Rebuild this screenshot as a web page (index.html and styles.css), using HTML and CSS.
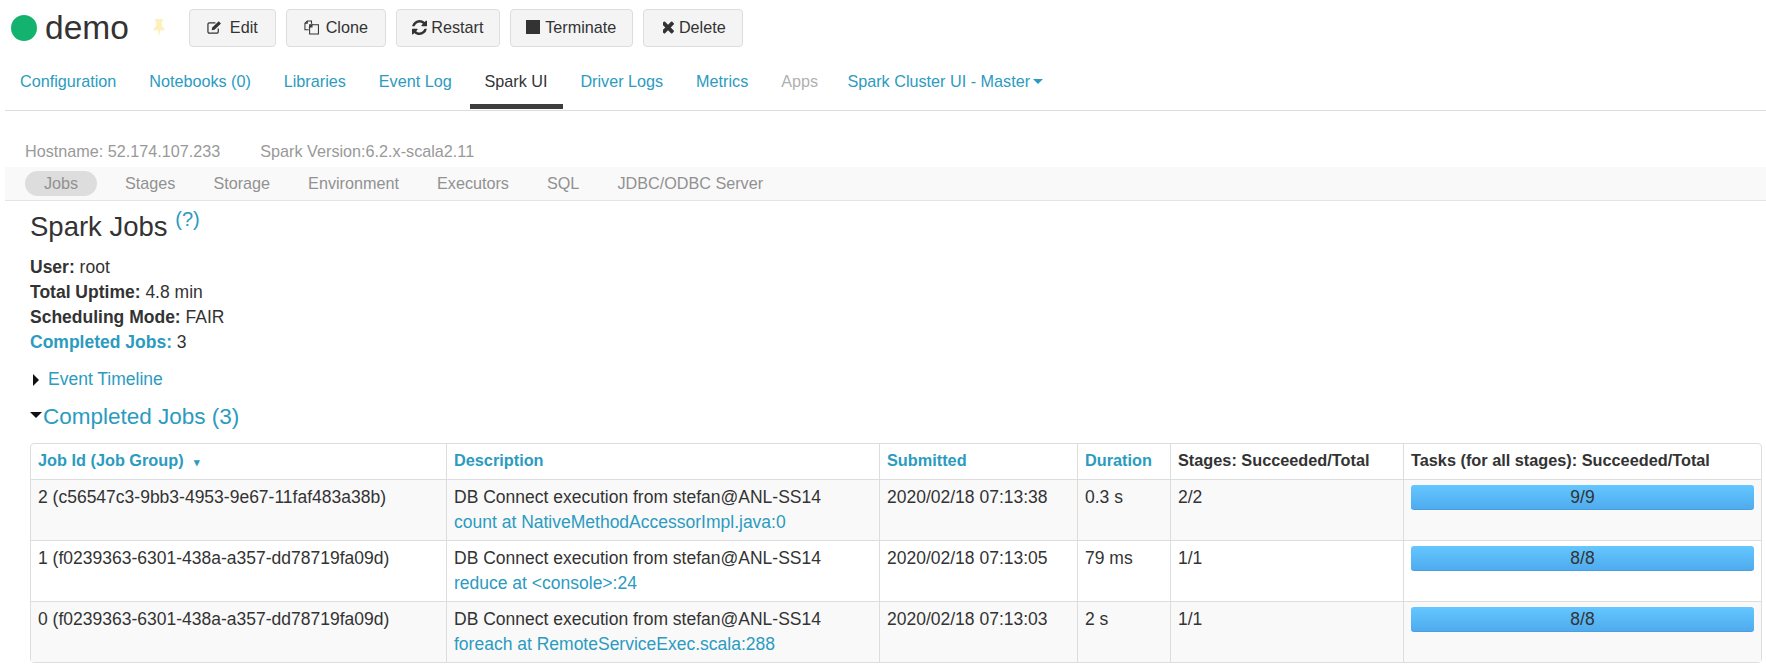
FILE: index.html
```html
<!DOCTYPE html>
<html>
<head>
    <meta charset="UTF-8">
    <title>demo - Spark UI</title>
    <link rel="stylesheet" href="styles.css">
</head>
<body>
    <div class="clusterHeader">
        <span class="statusDot"></span>
        <span class="clusterName">demo</span>
        <svg class="pin" viewBox="0 0 12 18"><path d="M2 0h8v1.700l-1.200 .8v5c1.800 .9 3 2.200 3 3.800H7L6 18l-1-6.700H.2c0-1.600 1.200-2.900 3-3.800v-5L2 1.700z" fill="#fdf0b8"/></svg>
        <div class="actions">
            <button class="btnEdit">
                <svg class="icon" viewBox="0 0 16 16"><path d="M12 9v3.500a1.500 1.500 0 0 1-1.500 1.500h-8A1.500 1.500 0 0 1 1 12.500v-8A1.500 1.500 0 0 1 2.500 3H9" fill="none" stroke="#333" stroke-width="1.300"/><path d="M5 11l.6-3L12.500 1.200l2.400 2.400L8 10.400z" fill="#333"/></svg>
                Edit
            </button>
            <button class="btnClone">
                <svg class="icon" viewBox="0 0 16 16"><path d="M5 10.500H1V3.500L3.500 1H8v3M3.500 1v2.500H1M6 5h9.400v10H6zM6 7.500L8.500 5v2.500z" fill="none" stroke="#333" stroke-width="1.100"/></svg>
                Clone
            </button>
            <button class="btnRestart">
                <svg class="icon" viewBox="0 0 1536 1536"><path d="M1511 928q0 5-1 7-64 268-268 434.500t-478 166.500q-146 0-282.500-55t-243.500-157l-129 129q-19 19-45 19t-45-19-19-45v-448q0-26 19-45t45-19h448q26 0 45 19t19 45-19 45l-137 137q71 66 161 102t187 36q134 0 250-65t186-179q11-17 53-117 8-23 30-23h192q13 0 22.500 9.500t9.500 22.500zm25-800v448q0 26-19 45t-45 19h-448q-26 0-45-19t-19-45 19-45l138-138q-148-137-349-137-134 0-250 65t-186 179q-11 17-53 117-8 23-30 23h-199q-13 0-22.500-9.500t-9.500-22.500v-7q65-268 270-434.500t480-166.500q146 0 284 55.500t245 156.500l130-129q19-19 45-19t45 19 19 45z" fill="#333"/></svg>
                Restart
            </button>
            <button class="btnTerminate">
                <span class="stopIcon"></span>
                Terminate
            </button>
            <button class="btnDelete">
                <svg class="icon" viewBox="200 200 1200 1300"><path d="M1298 1214q0 40-28 68l-136 136q-28 28-68 28t-68-28l-294-294-294 294q-28 28-68 28t-68-28l-136-136q-28-28-28-68t28-68l294-294-294-294q-28-28-28-68t28-68l136-136q28-28 68-28t68 28l294 294 294-294q28-28 68-28t68 28l136 136q28 28 28 68t-28 68l-294 294 294 294q28 28 28 68z" fill="#333"/></svg>
                Delete
            </button>
        </div>
    </div>

    <ul class="clusterTabs">
        <li><a href="#">Configuration</a></li>
        <li><a href="#">Notebooks (0)</a></li>
        <li><a href="#">Libraries</a></li>
        <li><a href="#">Event Log</a></li>
        <li class="active"><a href="#">Spark UI</a></li>
        <li><a href="#">Driver Logs</a></li>
        <li><a href="#">Metrics</a></li>
        <li class="disabled"><a href="#">Apps</a></li>
        <li class="masterTab"><a href="#">Spark Cluster UI - Master<span class="caret"></span></a></li>
    </ul>

    <div class="sparkInfo">
        <span>Hostname: 52.174.107.233</span>
        <span>Spark Version:6.2.x-scala2.11</span>
    </div>

    <ul class="sparkNav">
        <li class="active"><a href="#">Jobs</a></li>
        <li><a href="#">Stages</a></li>
        <li><a href="#">Storage</a></li>
        <li><a href="#">Environment</a></li>
        <li><a href="#">Executors</a></li>
        <li><a href="#">SQL</a></li>
        <li><a href="#">JDBC/ODBC Server</a></li>
    </ul>

    <div class="content">
        <h3 class="pageTitle">Spark Jobs <sup><a href="#">(?)</a></sup></h3>

        <ul class="summary">
            <li><strong>User:</strong> root</li>
            <li><strong>Total Uptime:</strong> 4.8 min</li>
            <li><strong>Scheduling Mode:</strong> FAIR</li>
            <li><a href="#"><strong>Completed Jobs:</strong></a> 3</li>
        </ul>

        <div class="timeline">
            <span class="arrowRight"></span>
            <a href="#">Event Timeline</a>
        </div>

        <h4 class="sectionTitle"><span class="arrowDown"></span><a href="#">Completed Jobs (3)</a></h4>

        <table class="jobsTable">
            <colgroup>
                <col class="colId"><col class="colDesc"><col class="colSubmitted">
                <col class="colDuration"><col class="colStages"><col class="colTasks">
            </colgroup>
            <thead>
                <tr>
                    <th><a href="#">Job Id (Job Group) <span class="sortArrow">&#9662;</span></a></th>
                    <th><a href="#">Description</a></th>
                    <th><a href="#">Submitted</a></th>
                    <th><a href="#">Duration</a></th>
                    <th>Stages: Succeeded/Total</th>
                    <th>Tasks (for all stages): Succeeded/Total</th>
                </tr>
            </thead>
            <tbody>
                <tr>
                    <td>2 (c56547c3-9bb3-4953-9e67-11faf483a38b)</td>
                    <td>DB Connect execution from stefan@ANL-SS14<br><a href="#">count at NativeMethodAccessorImpl.java:0</a></td>
                    <td>2020/02/18 07:13:38</td>
                    <td>0.3 s</td>
                    <td>2/2</td>
                    <td><div class="progress">9/9</div></td>
                </tr>
                <tr>
                    <td>1 (f0239363-6301-438a-a357-dd78719fa09d)</td>
                    <td>DB Connect execution from stefan@ANL-SS14<br><a href="#">reduce at &lt;console&gt;:24</a></td>
                    <td>2020/02/18 07:13:05</td>
                    <td>79 ms</td>
                    <td>1/1</td>
                    <td><div class="progress">8/8</div></td>
                </tr>
                <tr>
                    <td>0 (f0239363-6301-438a-a357-dd78719fa09d)</td>
                    <td>DB Connect execution from stefan@ANL-SS14<br><a href="#">foreach at RemoteServiceExec.scala:288</a></td>
                    <td>2020/02/18 07:13:03</td>
                    <td>2 s</td>
                    <td>1/1</td>
                    <td><div class="progress">8/8</div></td>
                </tr>
            </tbody>
        </table>
    </div>
</body>
</html>
```

FILE: styles.css
```css
body {
    margin: 0;
    font-family: "Liberation Sans", Arial, sans-serif;
    font-size: 17.5px;
    color: #333;
    background-color: white;
    overflow: hidden;
}

a {
    color: #2b9bc0;
    text-decoration: none;
}

ul {
    list-style: none;
    margin: 0;
    padding: 0;
}

.clusterHeader {
    display: flex;
    align-items: center;
    height: 38px;
    padding: 9px 0 0 11px;
}

.statusDot {
    width: 26px;
    height: 26px;
    border-radius: 50%;
    background-color: #13b36f;
}

.clusterName {
    margin-left: 8px;
    font-size: 33.5px;
    color: #333;
}

.pin {
    width: 12px;
    height: 18px;
    margin: 0 0 0 24px;
}

.actions {
    display: flex;
    gap: 10px;
    margin-left: 24px;
}

.actions button {
    display: flex;
    align-items: center;
    justify-content: center;
    height: 38px;
    padding: 0 0 2px;
    font-family: inherit;
    font-size: 16.2px;
    color: #333;
    background-color: #f4f4f4;
    border: 1px solid #ddd;
    border-radius: 4px;
}

.btnEdit { width: 87px; gap: 8px; }
.btnClone { width: 100px; gap: 7px; }
.btnRestart { width: 104px; gap: 4px; }
.btnTerminate { width: 123px; gap: 5px; }
.btnDelete { width: 100px; gap: 4px; }

.actions .btnDelete {
    padding-left: 3px;
}

.icon {
    width: 15px;
    height: 15px;
}

.btnDelete .icon {
    width: 12px;
    height: 13px;
}

.stopIcon {
    width: 14px;
    height: 14px;
    background-color: #333;
}

.clusterTabs {
    display: flex;
    gap: 2.9px;
    height: 63px;
    margin-left: 5px;
    border-bottom: 1px solid #ddd;
    font-size: 16.2px;
}

.clusterTabs li a {
    display: block;
    height: 57px;
    padding: 0 15px;
    line-height: 68px;
}

.clusterTabs li.active a {
    color: #333;
    border-bottom: 5px solid #3d3d3d;
}

.clusterTabs li.disabled a {
    color: #b0b0b0;
}

.clusterTabs .masterTab {
    margin-left: -3.5px;
}

.caret {
    display: inline-block;
    margin-left: 3px;
    vertical-align: 3px;
    border-top: 5px solid #2b9bc0;
    border-left: 5px solid transparent;
    border-right: 5px solid transparent;
}

.sparkInfo {
    display: flex;
    gap: 40px;
    height: 24px;
    padding: 28px 0 0 25px;
    font-size: 16.2px;
    line-height: 24px;
    color: #999;
}

.sparkNav {
    display: flex;
    align-items: center;
    gap: 38px;
    height: 33px;
    margin: 4px 0 0 5px;
    padding-left: 20px;
    font-size: 16.2px;
    background-color: #f9f9f9;
    border-bottom: 1px solid #e5e5e5;
}

.sparkNav a {
    color: #919191;
}

.sparkNav li.active {
    width: 72px;
    margin-right: -10px;
    line-height: 25px;
    text-align: center;
    background-color: #ddd;
    border-radius: 13px;
}

.content {
    padding: 0 4px 0 30px;
}

.pageTitle {
    margin: 10px 0 0;
    font-size: 27.5px;
    font-weight: normal;
    line-height: 32px;
}

.pageTitle sup {
    font-size: 20px;
    line-height: 0;
}

.summary {
    margin-top: 12px;
    line-height: 25px;
}

.timeline {
    display: flex;
    align-items: center;
    margin-top: 12px;
    line-height: 25px;
}

.arrowRight {
    margin: 0 9px 0 3px;
    border-left: 6px solid #111;
    border-top: 6px solid transparent;
    border-bottom: 6px solid transparent;
}

.sectionTitle {
    display: flex;
    align-items: center;
    margin: 10px 0 0;
    font-size: 22.5px;
    font-weight: normal;
    line-height: 30px;
}

.arrowDown {
    margin: -5px 1px 0 0;
    border-top: 6px solid #111;
    border-left: 6px solid transparent;
    border-right: 6px solid transparent;
}

.jobsTable {
    width: 1732px;
    margin-top: 11px;
    table-layout: fixed;
    border-collapse: separate;
    border-spacing: 0;
    border: 1px solid #ddd;
    border-radius: 4px;
}

.colId { width: 415px; }
.colDesc { width: 433px; }
.colSubmitted { width: 198px; }
.colDuration { width: 93px; }
.colStages { width: 233px; }

.jobsTable th,
.jobsTable td {
    padding: 0 7px;
    text-align: left;
    vertical-align: top;
    border-left: 1px solid #ddd;
    overflow: hidden;
    white-space: nowrap;
}

.jobsTable th:first-child,
.jobsTable td:first-child {
    border-left: none;
}

.jobsTable th {
    font-size: 16.3px;
    line-height: 33px;
    font-weight: bold;
}

.jobsTable td {
    height: 61px;
    padding-top: 5px;
    box-sizing: border-box;
    line-height: 25px;
    border-top: 1px solid #ddd;
}

.jobsTable tbody tr:nth-child(odd) td {
    background-color: #f9f9f9;
}

.sortArrow {
    margin-left: 6px;
    font-size: 11px;
}

.progress {
    height: 25px;
    line-height: 24px;
    text-align: center;
    box-sizing: border-box;
    background: linear-gradient(to bottom, #64c7ff, #4fabee);
    border-bottom: 1px solid #4a9fdc;
    border-radius: 3px;
}
```
